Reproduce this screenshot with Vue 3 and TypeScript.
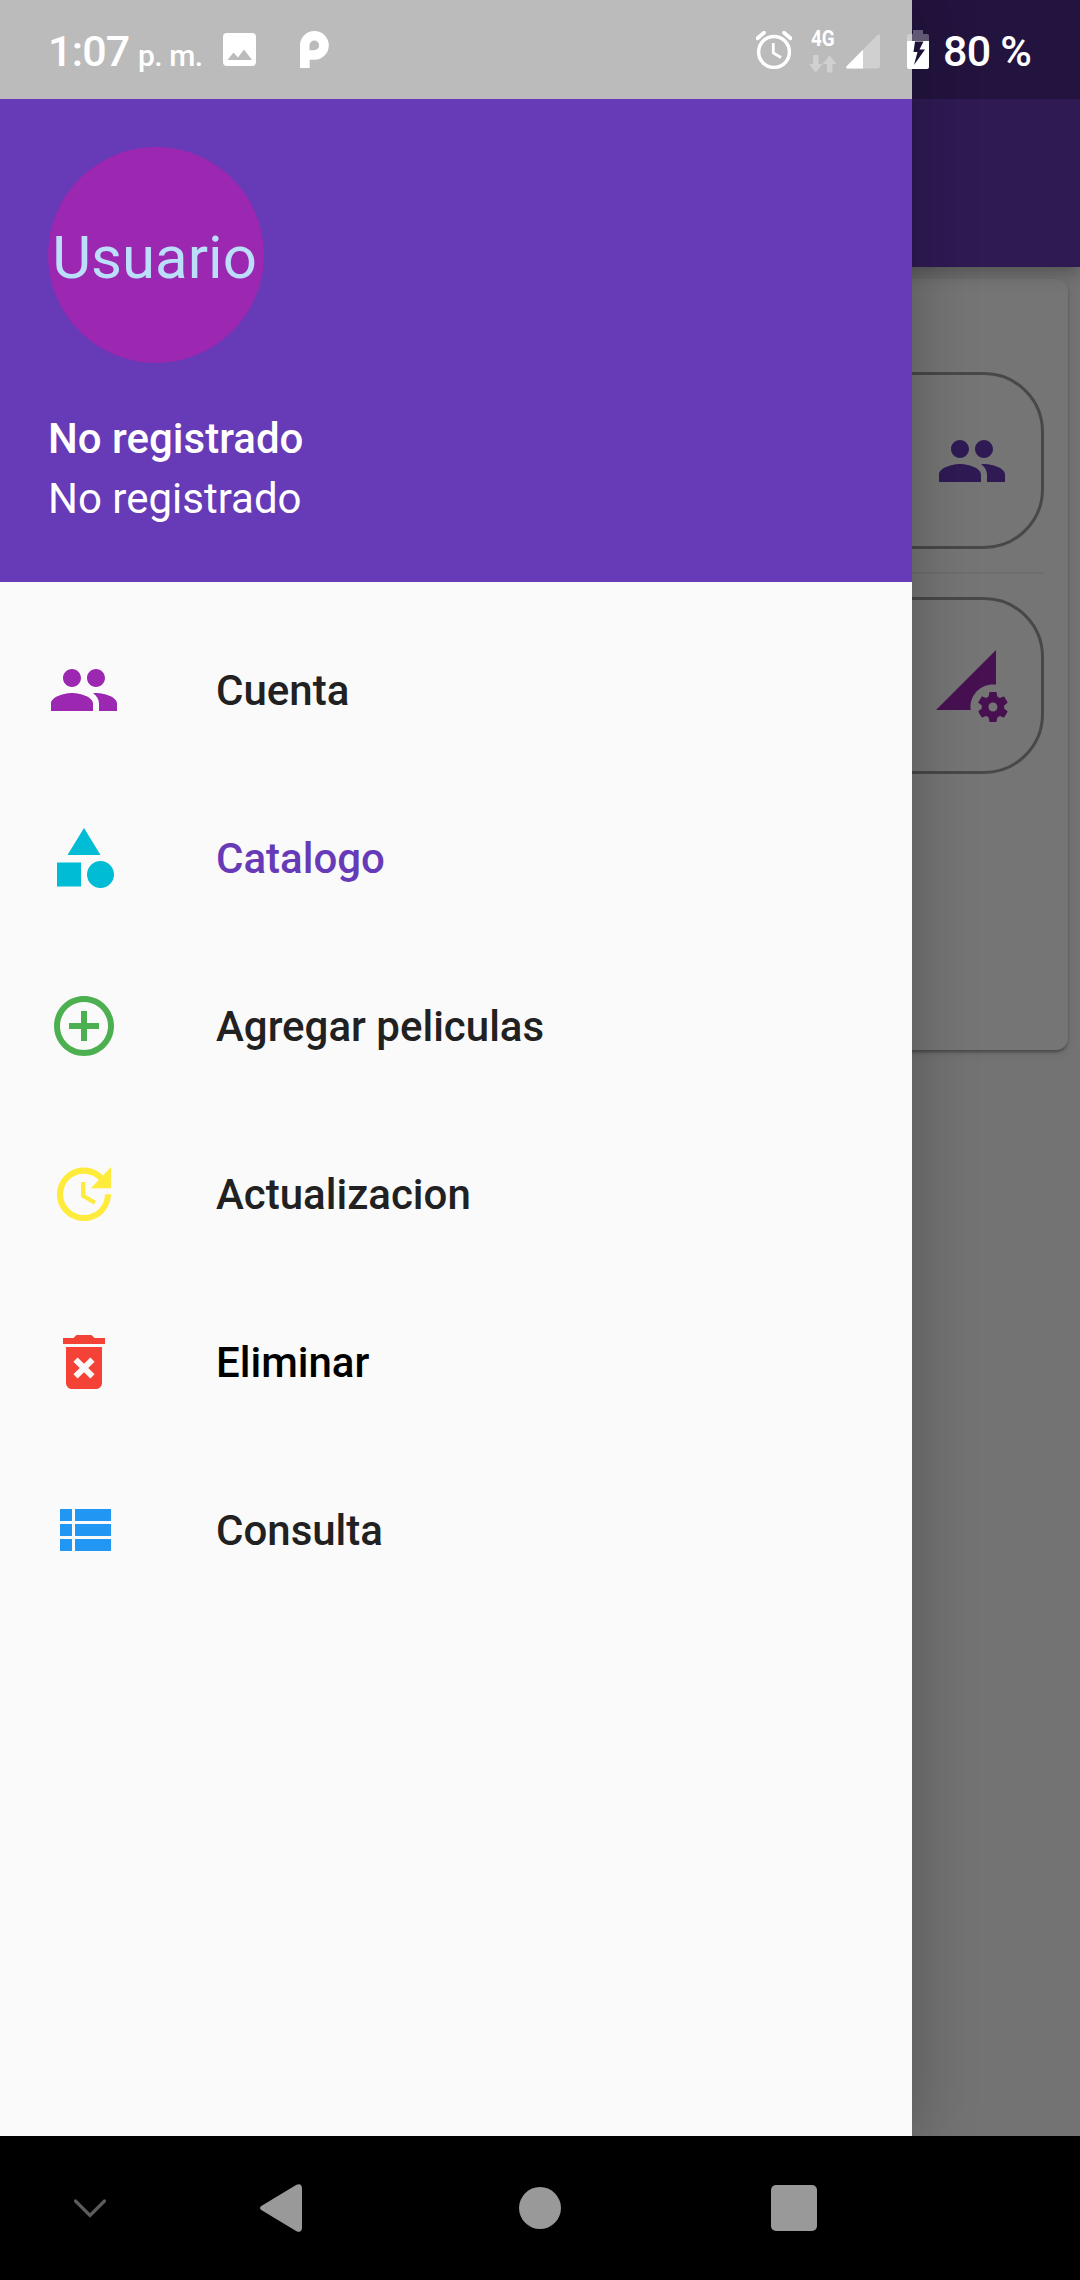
<script setup lang="ts">
interface MenuItem {
  label: string
  icon: string
  color: string
  textColor: string
}

const people =
  'M16 11c1.66 0 2.99-1.34 2.99-3S17.66 5 16 5c-1.66 0-3 1.34-3 3s1.34 3 3 3zm-8 0c1.66 0 2.99-1.34 2.99-3S9.66 5 8 5C6.34 5 5 6.34 5 8s1.34 3 3 3zm0 2c-2.33 0-7 1.17-7 3.5V19h14v-2.5c0-2.33-4.67-3.5-7-3.5zm8 0c-.29 0-.62.02-.97.05 1.16.84 1.97 1.97 1.97 3.45V19h6v-2.5c0-2.33-4.67-3.5-7-3.5z'

const dataSetting =
  'M18.99 11.5c.34 0 .67.03 1 .07L20 0 0 20h11.56c-.04-.33-.07-.66-.07-1 0-4.14 3.36-7.5 7.5-7.5zm3.71 7.99c.02-.16.04-.32.04-.49 0-.17-.01-.33-.04-.49l1.06-.83c.09-.08.12-.21.06-.32l-1-1.73c-.06-.11-.19-.15-.31-.11l-1.24.5c-.26-.2-.54-.37-.85-.49l-.19-1.32c-.01-.12-.12-.21-.24-.21h-2c-.12 0-.23.09-.25.21l-.19 1.32c-.3.13-.59.29-.85.49l-1.24-.5c-.11-.04-.24 0-.31.11l-1 1.73c-.06.11-.04.24.06.32l1.06.83c-.02.16-.03.32-.03.49 0 .17.01.33.03.49l-1.06.83c-.09.08-.12.21-.06.32l1 1.73c.06.11.19.15.31.11l1.24-.5c.26.2.54.37.85.49l.19 1.32c.02.12.12.21.25.21h2c.12 0 .23-.09.24-.21l.19-1.32c.3-.13.59-.29.85-.49l1.24.5c.11.04.24 0 .31-.11l1-1.73c.06-.11.04-.24-.06-.32l-1.07-.83zm-3.71 1.01c-.83 0-1.5-.67-1.5-1.5s.67-1.5 1.5-1.5 1.5.67 1.5 1.5-.67 1.5-1.5 1.5z'

const items: MenuItem[] = [
  { label: 'Cuenta', icon: people, color: '#9c27b0', textColor: '#212121' },
  {
    label: 'Catalogo',
    icon: 'M12 2l-5.5 9h11zM17.5 13a4.5 4.5 0 1 0 0 9 4.5 4.5 0 1 0 0-9zM3 13.5h8v8H3z',
    color: '#00bcd4',
    textColor: '#673ab7',
  },
  {
    label: 'Agregar peliculas',
    icon: 'M13 7h-2v4H7v2h4v4h2v-4h4v-2h-4V7zm-1-5C6.48 2 2 6.48 2 12s4.48 10 10 10 10-4.48 10-10S17.52 2 12 2zm0 18c-4.41 0-8-3.59-8-8s3.59-8 8-8 8 3.59 8 8-3.59 8-8 8z',
    color: '#4caf50',
    textColor: '#212121',
  },
  {
    label: 'Actualizacion',
    icon: 'M21 10.12h-6.78l2.74-2.82c-2.73-2.7-7.15-2.8-9.88-.1-2.73 2.71-2.73 7.08 0 9.79s7.15 2.71 9.88 0C18.32 15.65 19 14.08 19 12.1h2c0 1.98-.88 4.55-2.64 6.29-3.51 3.48-9.21 3.48-12.72 0-3.5-3.47-3.53-9.11-.02-12.58s9.14-3.47 12.65 0L21 3v7.12zM12.5 8v4.25l3.5 2.08-.72 1.21L11 13V8h1.5z',
    color: '#ffeb3b',
    textColor: '#212121',
  },
  {
    label: 'Eliminar',
    icon: 'M6 19c0 1.1.9 2 2 2h8c1.1 0 2-.9 2-2V7H6v12zm2.46-7.12l1.41-1.41L12 12.59l2.12-2.12 1.41 1.41L13.41 14l2.12 2.12-1.41 1.41L12 15.41l-2.12 2.12-1.41-1.41L10.59 14l-2.13-2.12zM15.5 4l-1-1h-5l-1 1H5v2h14V4z',
    color: '#f44336',
    textColor: '#000000',
  },
  {
    label: 'Consulta',
    icon: 'M4 14h4v-4H4v4zm0 5h4v-4H4v4zM4 9h4V5H4v4zm5 5h12v-4H9v4zm0 5h12v-4H9v4zM9 5v4h12V5H9z',
    color: '#2196f3',
    textColor: '#212121',
  },
]

const tiles = [
  { icon: people, color: '#673ab7' },
  { icon: dataSetting, color: '#9c27b0' },
]
</script>

<template>
  <div class="screen">
    <div class="viewport">
      <!-- page behind the drawer -->
      <div class="page">
        <header class="app-bar"></header>
        <main class="card">
          <template v-for="(tile, i) in tiles" :key="i">
            <hr v-if="i > 0" class="divider" />
            <div class="tile">
              <svg class="icon" viewBox="0 0 24 24"><path :d="tile.icon" :fill="tile.color" /></svg>
            </div>
          </template>
        </main>
      </div>
      <div class="scrim"></div>

      <aside class="drawer">
        <div class="account">
          <div class="avatar"><span>Usuario</span></div>
          <div class="name">No registrado</div>
          <div class="email">No registrado</div>
        </div>
        <nav class="menu">
          <div v-for="item in items" :key="item.label" class="item" :style="{ color: item.textColor }">
            <svg class="icon" viewBox="0 0 24 24"><path :d="item.icon" :fill="item.color" /></svg>
            <span>{{ item.label }}</span>
          </div>
        </nav>
      </aside>

      <div class="status">
        <span class="clock">1:07</span>
        <span class="ampm">p. m.</span>
        <svg class="picture" width="33" height="33" viewBox="0 0 33 33">
          <path fill="#fff" fill-rule="evenodd" d="M4 0H29a4 4 0 0 1 4 4V29a4 4 0 0 1-4 4H4a4 4 0 0 1-4-4V4a4 4 0 0 1 4-4ZM4.500 27H29L21 16.500L15 24.500L10.500 19.500Z" />
        </svg>
        <svg class="brand" width="29" height="37" viewBox="0 0 29 37">
          <path fill="#fff" fill-rule="evenodd" d="M0 37V14.400A14.400 14.400 0 1 1 14.400 28.800H9.700V37ZM9.500 19.200H14.200A4.800 4.800 0 1 0 9.500 14.400Z" />
        </svg>
        <span class="grow"></span>
        <svg class="alarm" width="36" height="38" viewBox="0 0 36 38" fill="none" stroke="#fff">
          <circle cx="18" cy="21" r="15.400" stroke-width="3.500" />
          <path d="M1.500 7.200L8 1.800M34.500 7.200L28 1.800" stroke-width="3.800" stroke-linecap="round" />
          <path d="M17.300 12V22L25 26.500" stroke-width="2.800" />
        </svg>
        <div class="network">
          <span>4G</span>
          <svg width="28" height="18" viewBox="0 0 28 18" fill="#d0d0d0">
            <path d="M4 0H9.500V9H13.500L6.700 17.500L0 9H4ZM18 17.500V9H13.500L20.700 .5L27.500 9H23.500V17.500Z" />
          </svg>
        </div>
        <svg class="signal" width="34" height="35" viewBox="0 0 34 35">
          <path d="M1.500 34.500Q-.7 34 .7 32.300L31.500 1Q34 -.7 34 2V32.500Q34 34.500 32 34.500Z" fill="#d0d0d0" />
          <path d="M1.500 34.500Q-.7 34 .7 32.300L17 15.700V34.500Z" fill="#fff" />
        </svg>
        <svg class="battery" width="22" height="39" viewBox="0 0 22 39">
          <path d="M6 0H16V4H20Q22 4 22 6V11H0V6Q0 4 2 4H6Z" fill="#fff" fill-opacity=".3" />
          <path fill="#fff" fill-rule="evenodd" d="M0 11H22V37Q22 39 20 39H2Q0 39 0 37ZM8 11.500L6.500 22H10.500L7 35L18 19.500H12.500L16.500 11.500Z" />
        </svg>
        <span class="percent">80 %</span>
      </div>
    </div>

    <div class="navbar">
      <svg class="chevron" width="34" height="22" viewBox="0 0 34 22" fill="none" stroke="#5c5c5c" stroke-width="3.200" stroke-linecap="round">
        <path d="M2.500 4L17 18.500L31.500 4" />
      </svg>
      <svg class="back" width="42" height="48" viewBox="0 0 42 48" fill="#999">
        <path d="M1.300 22L36.500 .8Q41.500 -1.300 42 4V44Q41.500 49.300 36.500 47.200L1.300 26Q-1.300 24 1.300 22Z" />
      </svg>
      <div class="home"></div>
      <div class="recents"></div>
    </div>
  </div>
</template>

<style>
body {
  margin: 0;
}
</style>

<style scoped>
.screen {
  width: 1080px;
  height: 2280px;
  display: flex;
  flex-direction: column;
  overflow: hidden;
  font-family: Roboto, "Liberation Sans", sans-serif;
}
.viewport {
  position: relative;
  height: 2136px;
  overflow: hidden;
}
.page {
  display: flex;
  flex-direction: column;
  height: 100%;
  background: #fafafa;
}
.app-bar {
  flex: none;
  height: 267px;
  background: #673ab7;
  box-shadow: 0 6px 12px -3px rgba(0, 0, 0, 0.16), 0 12px 15px rgba(0, 0, 0, 0.08), 0 3px 30px rgba(0, 0, 0, 0.08);
  z-index: 1;
}
.card {
  box-sizing: border-box;
  height: 771px;
  margin: 12px;
  padding: 93px 24px 0;
  border-radius: 12px;
  background: #fff;
  box-shadow: 0 3px 3px -1px rgba(0, 0, 0, 0.2), 0 2px 3px rgba(0, 0, 0, 0.12), 0 3px 9px rgba(0, 0, 0, 0.12);
}
.tile {
  box-sizing: border-box;
  height: 177px;
  padding-right: 33px;
  border: 3px solid #9e9e9e;
  border-radius: 60px;
  display: flex;
  align-items: center;
  justify-content: flex-end;
}
.divider {
  height: 2px;
  margin: 23px 0;
  border: 0;
  background: #efefef;
}
.icon {
  width: 72px;
  height: 72px;
  display: block;
  flex: none;
}
.scrim {
  position: absolute;
  inset: 0;
  background: rgba(0, 0, 0, 0.54);
  z-index: 2;
}
.drawer {
  position: absolute;
  top: 0;
  left: 0;
  bottom: 0;
  box-sizing: border-box;
  width: 912px;
  padding-top: 99px;
  background: #fafafa;
  box-shadow: 0 0 56px 6px rgba(0, 0, 0, 0.23);
  z-index: 3;
}
.account {
  box-sizing: border-box;
  height: 483px;
  padding: 48px 48px 0;
  background: #673ab7;
  color: #fff;
  font-size: 42px;
}
.avatar {
  width: 216px;
  height: 216px;
  border-radius: 50%;
  background: #9c27b0;
  color: #bbdefb;
  font-size: 60px;
  display: flex;
  align-items: center;
  justify-content: center;
  line-height: 70px;
}
.avatar span {
  padding: 5px 3px 0 0;
}
.name {
  margin-top: 46px;
  line-height: 60px;
  font-weight: 500;
}
.email {
  line-height: 60px;
}
.menu {
  padding-top: 24px;
}
.item {
  height: 168px;
  padding-left: 48px;
  display: flex;
  align-items: center;
  gap: 96px;
  font-size: 42px;
  font-weight: 500;
}
.status {
  position: absolute;
  top: 0;
  left: 0;
  box-sizing: border-box;
  width: 1080px;
  height: 99px;
  padding: 0 49px 0 48px;
  display: flex;
  align-items: flex-start;
  background: rgba(0, 0, 0, 0.25);
  color: #fff;
  font-weight: 500;
  white-space: nowrap;
  z-index: 4;
}
.clock,
.percent {
  margin-top: 26px;
  font-size: 43px;
  line-height: 50px;
  letter-spacing: -0.8px;
}
.clock {
  width: 85px;
}
.percent {
  width: 88px;
}
.ampm {
  width: 64px;
  margin: 37px 0 0 5px;
  font-size: 30px;
  line-height: 38px;
  letter-spacing: -0.5px;
}
.picture {
  margin: 33px 0 0 21px;
}
.brand {
  margin: 31px 0 0 44px;
}
.grow {
  flex: 1;
}
.alarm {
  margin-top: 31px;
}
.network {
  width: 28px;
  margin: 27px 0 0 17px;
  display: flex;
  flex-direction: column;
  align-items: center;
  font-size: 22px;
  line-height: 24px;
  font-weight: 700;
}
.network span {
  transform: scaleX(0.86);
}
.network svg {
  margin-top: 4px;
}
.signal {
  margin: 34px 0 0 9px;
}
.battery {
  margin: 30px 14px 0 27px;
}
.navbar {
  height: 144px;
  background: #000;
  display: flex;
  align-items: center;
}
.chevron {
  margin-left: 73px;
}
.back {
  margin-left: 153px;
}
.home {
  width: 42px;
  height: 42px;
  margin-left: 217px;
  border-radius: 50%;
  background: #999;
}
.recents {
  width: 46px;
  height: 46px;
  margin-left: 210px;
  border-radius: 5px;
  background: #999;
}
</style>
